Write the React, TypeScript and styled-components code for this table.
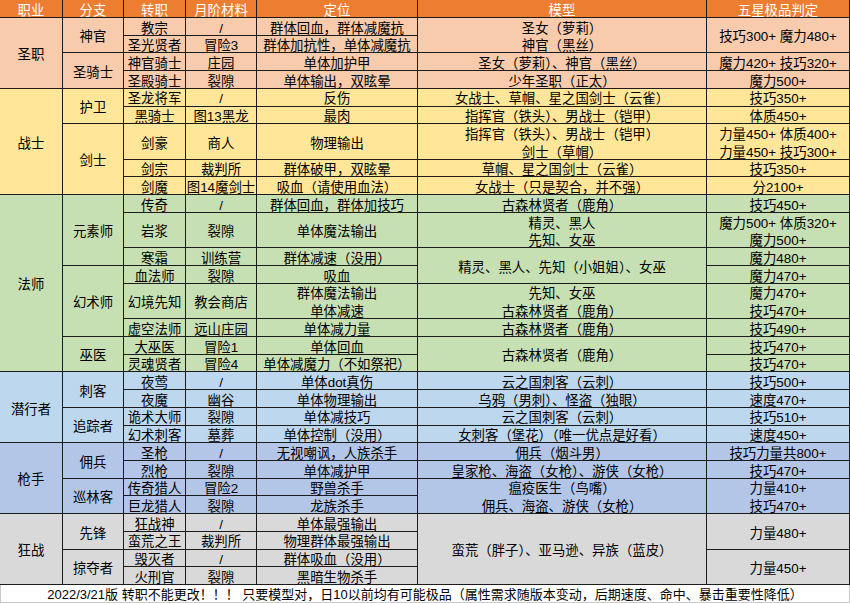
import React from 'react';
import styled, { createGlobalStyle } from 'styled-components';

const Global = createGlobalStyle`
  html, body { margin: 0; padding: 0; background: #ffffff; }
  body { font-family: "Liberation Sans", "Noto Sans CJK SC", sans-serif; }
`;

type C = { t: string[]; s: number };
const c = (t: string | string[], s = 1): C => ({ t: Array.isArray(t) ? t : [t], s });

type Section = {
  name: string;
  bg: string;
  branch: C[];
  job: C[];
  mat: C[];
  role: C[];
  model: C[];
  star: C[];
};

const sections: Section[] = [
  {
    name: '圣职',
    bg: '#F8CBAD',
    branch: [c('神官', 2), c('圣骑士', 2)],
    job: [c('教宗'), c('圣光贤者'), c('神官骑士'), c('圣殿骑士')],
    mat: [c('/'), c('冒险3'), c('庄园'), c('裂隙')],
    role: [c('群体回血，群体减魔抗'), c('群体加抗性，单体减魔抗'), c('单体加护甲'), c('单体输出，双眩晕')],
    model: [c(['圣女（萝莉）', '神官（黑丝）'], 2), c('圣女（萝莉）、神官（黑丝）'), c('少年圣职（正太）')],
    star: [c('技巧300+ 魔力480+', 2), c('魔力420+ 技巧320+'), c('魔力500+')],
  },
  {
    name: '战士',
    bg: '#FFE699',
    branch: [c('护卫', 2), c('剑士', 4)],
    job: [c('圣龙将军'), c('黑骑士'), c('剑豪', 2), c('剑宗'), c('剑魔')],
    mat: [c('/'), c('图13黑龙'), c('商人', 2), c('裁判所'), c('图14魔剑士')],
    role: [c('反伤'), c('最肉'), c('物理输出', 2), c('群体破甲，双眩晕'), c('吸血（请使用血法）')],
    model: [
      c('女战士、草帽、星之国剑士（云雀）'),
      c('指挥官（铁头）、男战士（铠甲）'),
      c(['指挥官（铁头）、男战士（铠甲）', '剑士（草帽）'], 2),
      c('草帽、星之国剑士（云雀）'),
      c('女战士（只是契合，并不强）'),
    ],
    star: [c('技巧350+'), c('体质450+'), c(['力量450+ 体质400+', '力量450+ 技巧300+'], 2), c('技巧350+'), c('分2100+')],
  },
  {
    name: '法师',
    bg: '#C6E0B4',
    branch: [c('元素师', 4), c('幻术师', 4), c('巫医', 2)],
    job: [c('传奇'), c('岩浆', 2), c('寒霜'), c('血法师'), c('幻境先知', 2), c('虚空法师'), c('大巫医'), c('灵魂贤者')],
    mat: [c('/'), c('裂隙', 2), c('训练营'), c('裂隙'), c('教会商店', 2), c('远山庄园'), c('冒险1'), c('冒险4')],
    role: [
      c('群体回血，群体加技巧'),
      c('单体魔法输出', 2),
      c('群体减速（没用）'),
      c('吸血'),
      c(['群体魔法输出', '单体减速'], 2),
      c('单体减力量'),
      c('单体回血'),
      c('单体减魔力（不如祭祀）'),
    ],
    model: [
      c('古森林贤者（鹿角）'),
      c(['精灵、黑人', '先知、女巫'], 2),
      c('精灵、黑人、先知（小姐姐）、女巫', 2),
      c(['先知、女巫', '古森林贤者（鹿角）'], 2),
      c('古森林贤者（鹿角）'),
      c('古森林贤者（鹿角）', 2),
    ],
    star: [
      c('技巧450+'),
      c(['魔力500+ 体质320+', '魔力500+'], 2),
      c('魔力480+'),
      c('魔力470+'),
      c(['魔力470+', '技巧470+'], 2),
      c('技巧490+'),
      c('技巧470+'),
      c('技巧470+'),
    ],
  },
  {
    name: '潜行者',
    bg: '#BDD7EE',
    branch: [c('刺客', 2), c('追踪者', 2)],
    job: [c('夜莺'), c('夜魔'), c('诡术大师'), c('幻术刺客')],
    mat: [c('/'), c('幽谷'), c('裂隙'), c('墓葬')],
    role: [c('单体dot真伤'), c('单体物理输出'), c('单体减技巧'), c('单体控制（没用）')],
    model: [
      c('云之国刺客（云刺）'),
      c('乌鸦（男刺）、怪盗（独眼）'),
      c('云之国刺客（云刺）'),
      c('女刺客（堡花）（唯一优点是好看）'),
    ],
    star: [c('技巧500+'), c('速度470+'), c('技巧510+'), c('速度450+')],
  },
  {
    name: '枪手',
    bg: '#B4C6E7',
    branch: [c('佣兵', 2), c('巡林客', 2)],
    job: [c('圣枪'), c('烈枪'), c('传奇猎人'), c('巨龙猎人')],
    mat: [c('/'), c('裂隙'), c('冒险2'), c('裂隙')],
    role: [c('无视嘲讽，人族杀手'), c('单体减护甲'), c('野兽杀手'), c('龙族杀手')],
    model: [
      c('佣兵（烟斗男）'),
      c('皇家枪、海盗（女枪）、游侠（女枪）'),
      c(['瘟疫医生（鸟嘴）', '佣兵、海盗、游侠（女枪）'], 2),
    ],
    star: [c('技巧力量共800+'), c('技巧470+'), c(['力量410+', '技巧470+'], 2)],
  },
  {
    name: '狂战',
    bg: '#D9D9D9',
    branch: [c('先锋', 2), c('掠夺者', 2)],
    job: [c('狂战神'), c('蛮荒之王'), c('毁灭者'), c('火刑官')],
    mat: [c('/'), c('裁判所'), c('/'), c('裂隙')],
    role: [c('单体最强输出'), c('物理群体最强输出'), c('群体吸血（没用）'), c('黑暗生物杀手')],
    model: [c('蛮荒（胖子）、亚马逊、异族（蓝皮）', 4)],
    star: [c('力量480+', 2), c('力量450+', 2)],
  },
];

const headers = ['职业', '分支', '转职', '月阶材料', '定位', '模型', '五星极品判定'];

const Page = styled.div`
  width: 850px;
  height: 603px;
  display: flex;
  flex-direction: column;
  overflow: hidden;
  color: #000;
`;

const Sheet = styled.div`
  display: grid;
  grid-template-columns: 62px 60px 61px 70px 160px 288px 142px;
  grid-template-rows: 17px repeat(32, 1fr);
  gap: 1px;
  height: 585px;
  box-sizing: border-box;
  padding: 0 1px 1px 0;
  background: #1c1c1c;
`;

const HeadCell = styled.div`
  grid-row: 1;
  background: #ed7d31;
  color: #ffffff;
  display: flex;
  align-items: center;
  justify-content: center;
  box-sizing: border-box;
  padding-top: 4px;
  font-size: 13.4px;
  line-height: 17px;
  white-space: nowrap;
`;

const Cell = styled.div<{ $bg: string; $row: number; $span: number; $col: number }>`
  grid-column: ${(p) => p.$col};
  grid-row: ${(p) => p.$row} / span ${(p) => p.$span};
  background: ${(p) => p.$bg};
  display: flex;
  flex-direction: column;
  align-items: center;
  justify-content: center;
  box-sizing: border-box;
  padding-top: 4px;
  min-height: 0;
  font-size: 13.4px;
  line-height: 17.6px;
  white-space: nowrap;
  text-align: center;
`;

const Line = styled.span`
  display: block;
`;

const Note = styled.div`
  height: 18px;
  box-sizing: border-box;
  border: 1px solid #c8c8c8;
  border-top: none;
  background: #ffffff;
  display: flex;
  align-items: center;
  justify-content: center;
  padding-top: 2px;
  font-size: 13px;
  line-height: 16px;
  white-space: pre;
`;

export default function App() {
  const cells: React.ReactNode[] = [];
  let start = 2;
  sections.forEach((sec, si) => {
    const total = sec.job.reduce((a, x) => a + x.s, 0);
    cells.push(
      <Cell key={`n${si}`} $bg={sec.bg} $col={1} $row={start} $span={total}>
        <Line>{sec.name}</Line>
      </Cell>
    );
    const cols = [sec.branch, sec.job, sec.mat, sec.role, sec.model, sec.star];
    cols.forEach((list, ci) => {
      let r = start;
      list.forEach((cell, k) => {
        cells.push(
          <Cell key={`c${si}-${ci}-${k}`} $bg={sec.bg} $col={ci + 2} $row={r} $span={cell.s}>
            {cell.t.map((line, li) => (
              <Line key={li}>{line}</Line>
            ))}
          </Cell>
        );
        r += cell.s;
      });
    });
    start += total;
  });

  return (
    <>
      <Global />
      <Page>
        <Sheet>
          {headers.map((h) => (
            <HeadCell key={h}>{h}</HeadCell>
          ))}
          {cells}
        </Sheet>
        <Note>
          {'2022/3/21版 转职不能更改！！！ 只要模型对，日10以前均有可能极品（属性需求随版本变动，后期速度、命中、暴击重要性降低）'}
        </Note>
      </Page>
    </>
  );
}
